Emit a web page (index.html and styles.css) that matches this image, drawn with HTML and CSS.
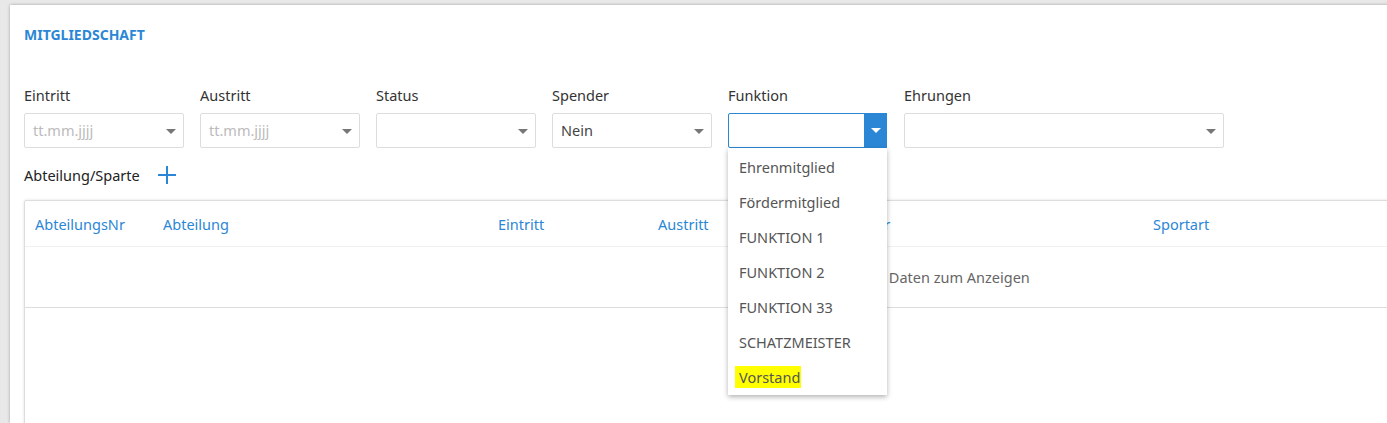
FILE: index.html
```html
<!DOCTYPE html>
<html lang="de">
<head>
    <meta charset="UTF-8">
    <title>Mitgliedschaft</title>
    <link rel="stylesheet" href="styles.css">
</head>
<body>
    <div class="card">
        <div class="card-title">MITGLIEDSCHAFT</div>

        <div class="fields">
            <div class="field">
                <div class="label">Eintritt</div>
                <div class="select placeholder">tt.mm.jjjj<span class="caret"></span></div>
            </div>
            <div class="field">
                <div class="label">Austritt</div>
                <div class="select placeholder">tt.mm.jjjj<span class="caret"></span></div>
            </div>
            <div class="field">
                <div class="label">Status</div>
                <div class="select"><span class="caret"></span></div>
            </div>
            <div class="field">
                <div class="label">Spender</div>
                <div class="select">Nein<span class="caret"></span></div>
            </div>
            <div class="field">
                <div class="label">Funktion</div>
                <div class="select open">
                    <span class="btn"><span class="caret white"></span></span>
                    <!-- offene liste -->
                    <ul class="dropdown">
                        <li>Ehrenmitglied</li>
                        <li>Fördermitglied</li>
                        <li>FUNKTION 1</li>
                        <li>FUNKTION 2</li>
                        <li>FUNKTION 33</li>
                        <li>SCHATZMEISTER</li>
                        <li><span class="hl">Vorstand</span></li>
                    </ul>
                </div>
            </div>
            <div class="field wide">
                <div class="label">Ehrungen</div>
                <div class="select"><span class="caret"></span></div>
            </div>
        </div>

        <div class="section">
            <span>Abteilung/Sparte</span>
            <svg class="plus" width="18" height="18" viewBox="0 0 18 18">
                <path d="M9 0V18M0 9H18" stroke="#2b87d6" stroke-width="2"/>
            </svg>
        </div>

        <div class="grid">
            <div class="grid-head">
                <div class="c1">AbteilungsNr</div>
                <div class="c2">Abteilung</div>
                <div class="c3">Eintritt</div>
                <div class="c4">Austritt</div>
                <div class="c5">Übungsleiter</div>
                <div class="c6">Sportart</div>
            </div>
            <div class="grid-empty">Keine Daten zum Anzeigen</div>
        </div>
    </div>
</body>
</html>
```

FILE: styles.css
```css
html,body{
    margin: 0;
    padding: 0;
    background: #e8e8e8;
    overflow: hidden;
    height: 423px;
    font: 14.5px/20px "Noto Sans", Arial, sans-serif;
    color: #333333;
}
.card{
    margin: 5px 0 0 10px;
    width: 1500px;
    height: 418px;
    background: white;
    box-shadow: 0 0 3px rgba(0,0,0,0.3);
    padding: 20px 0 0 14px;
    box-sizing: border-box;
    overflow: hidden;
}
.card-title{
    color: #2b87d6;
    font-weight: bold;
    font-size: 14px;
    height: 20px;
    margin-bottom: 40px;
}
.fields{
    display: flex;
    gap: 16px;
}
.field{
    width: 160px;
}
.field.wide{
    width: 320px;
}
.label{
    margin-bottom: 8px;
}
.select{
    position: relative;
    height: 35px;
    border: 1px solid #dddddd;
    border-radius: 2px;
    box-sizing: border-box;
    padding: 0 8px;
    line-height: 33px;
    color: #444444;
}
.select.placeholder{
    color: #bbbbbb;
}
.caret{
    position: absolute;
    right: 7px;
    top: 15px;
    width: 0;
    height: 0;
    border-left: 5px solid transparent;
    border-right: 5px solid transparent;
    border-top: 5px solid #777777;
}
.caret.white{
    border-top-color: white;
    right: 6px;
}
.select.open{
    border-color: #2b87d6;
    width: 159px;
}
.btn{
    position: absolute;
    top: -1px;
    right: -1px;
    width: 23px;
    height: 35px;
    background: #2b87d6;
}
.dropdown{
    position: absolute;
    z-index: 5;
    top: 34px;
    left: -1px;
    width: 159px;
    margin: 0;
    padding: 2px 0 0;
    list-style: none;
    background: white;
    box-shadow: 0 2px 5px rgba(0,0,0,0.3);
}
.dropdown li{
    height: 35px;
    line-height: 35px;
    padding-left: 11px;
    color: #555555;
}
.dropdown .hl{
    background: #ffff00;
    padding: 1px 1px 1px 4px;
    margin-left: -4px;
}
.section{
    display: flex;
    align-items: center;
    gap: 18px;
    height: 30px;
    margin: 12px 0 10px;
    color: #222222;
}
.grid{
    border: 1px solid #dddddd;
    border-radius: 2px;
    box-shadow: 0 0 3px rgba(0,0,0,0.12);
    height: 300px;
}
.grid-head{
    display: flex;
    height: 45px;
    align-items: center;
    color: #2b87d6;
    border-bottom: 1px solid #f0f0f0;
}
.grid-head div{
    padding-left: 10px;
    box-sizing: border-box;
}
.c1{ width: 128px; }
.c2{ width: 335px; }
.c3{ width: 160px; }
.c4{ width: 144px; }
.c5{ width: 351px; }
.c6{ width: 200px; }
.grid-empty{
    height: 60px;
    line-height: 60px;
    padding-left: 822px;
    color: #666666;
    border-bottom: 1px solid #dddddd;
}
```
